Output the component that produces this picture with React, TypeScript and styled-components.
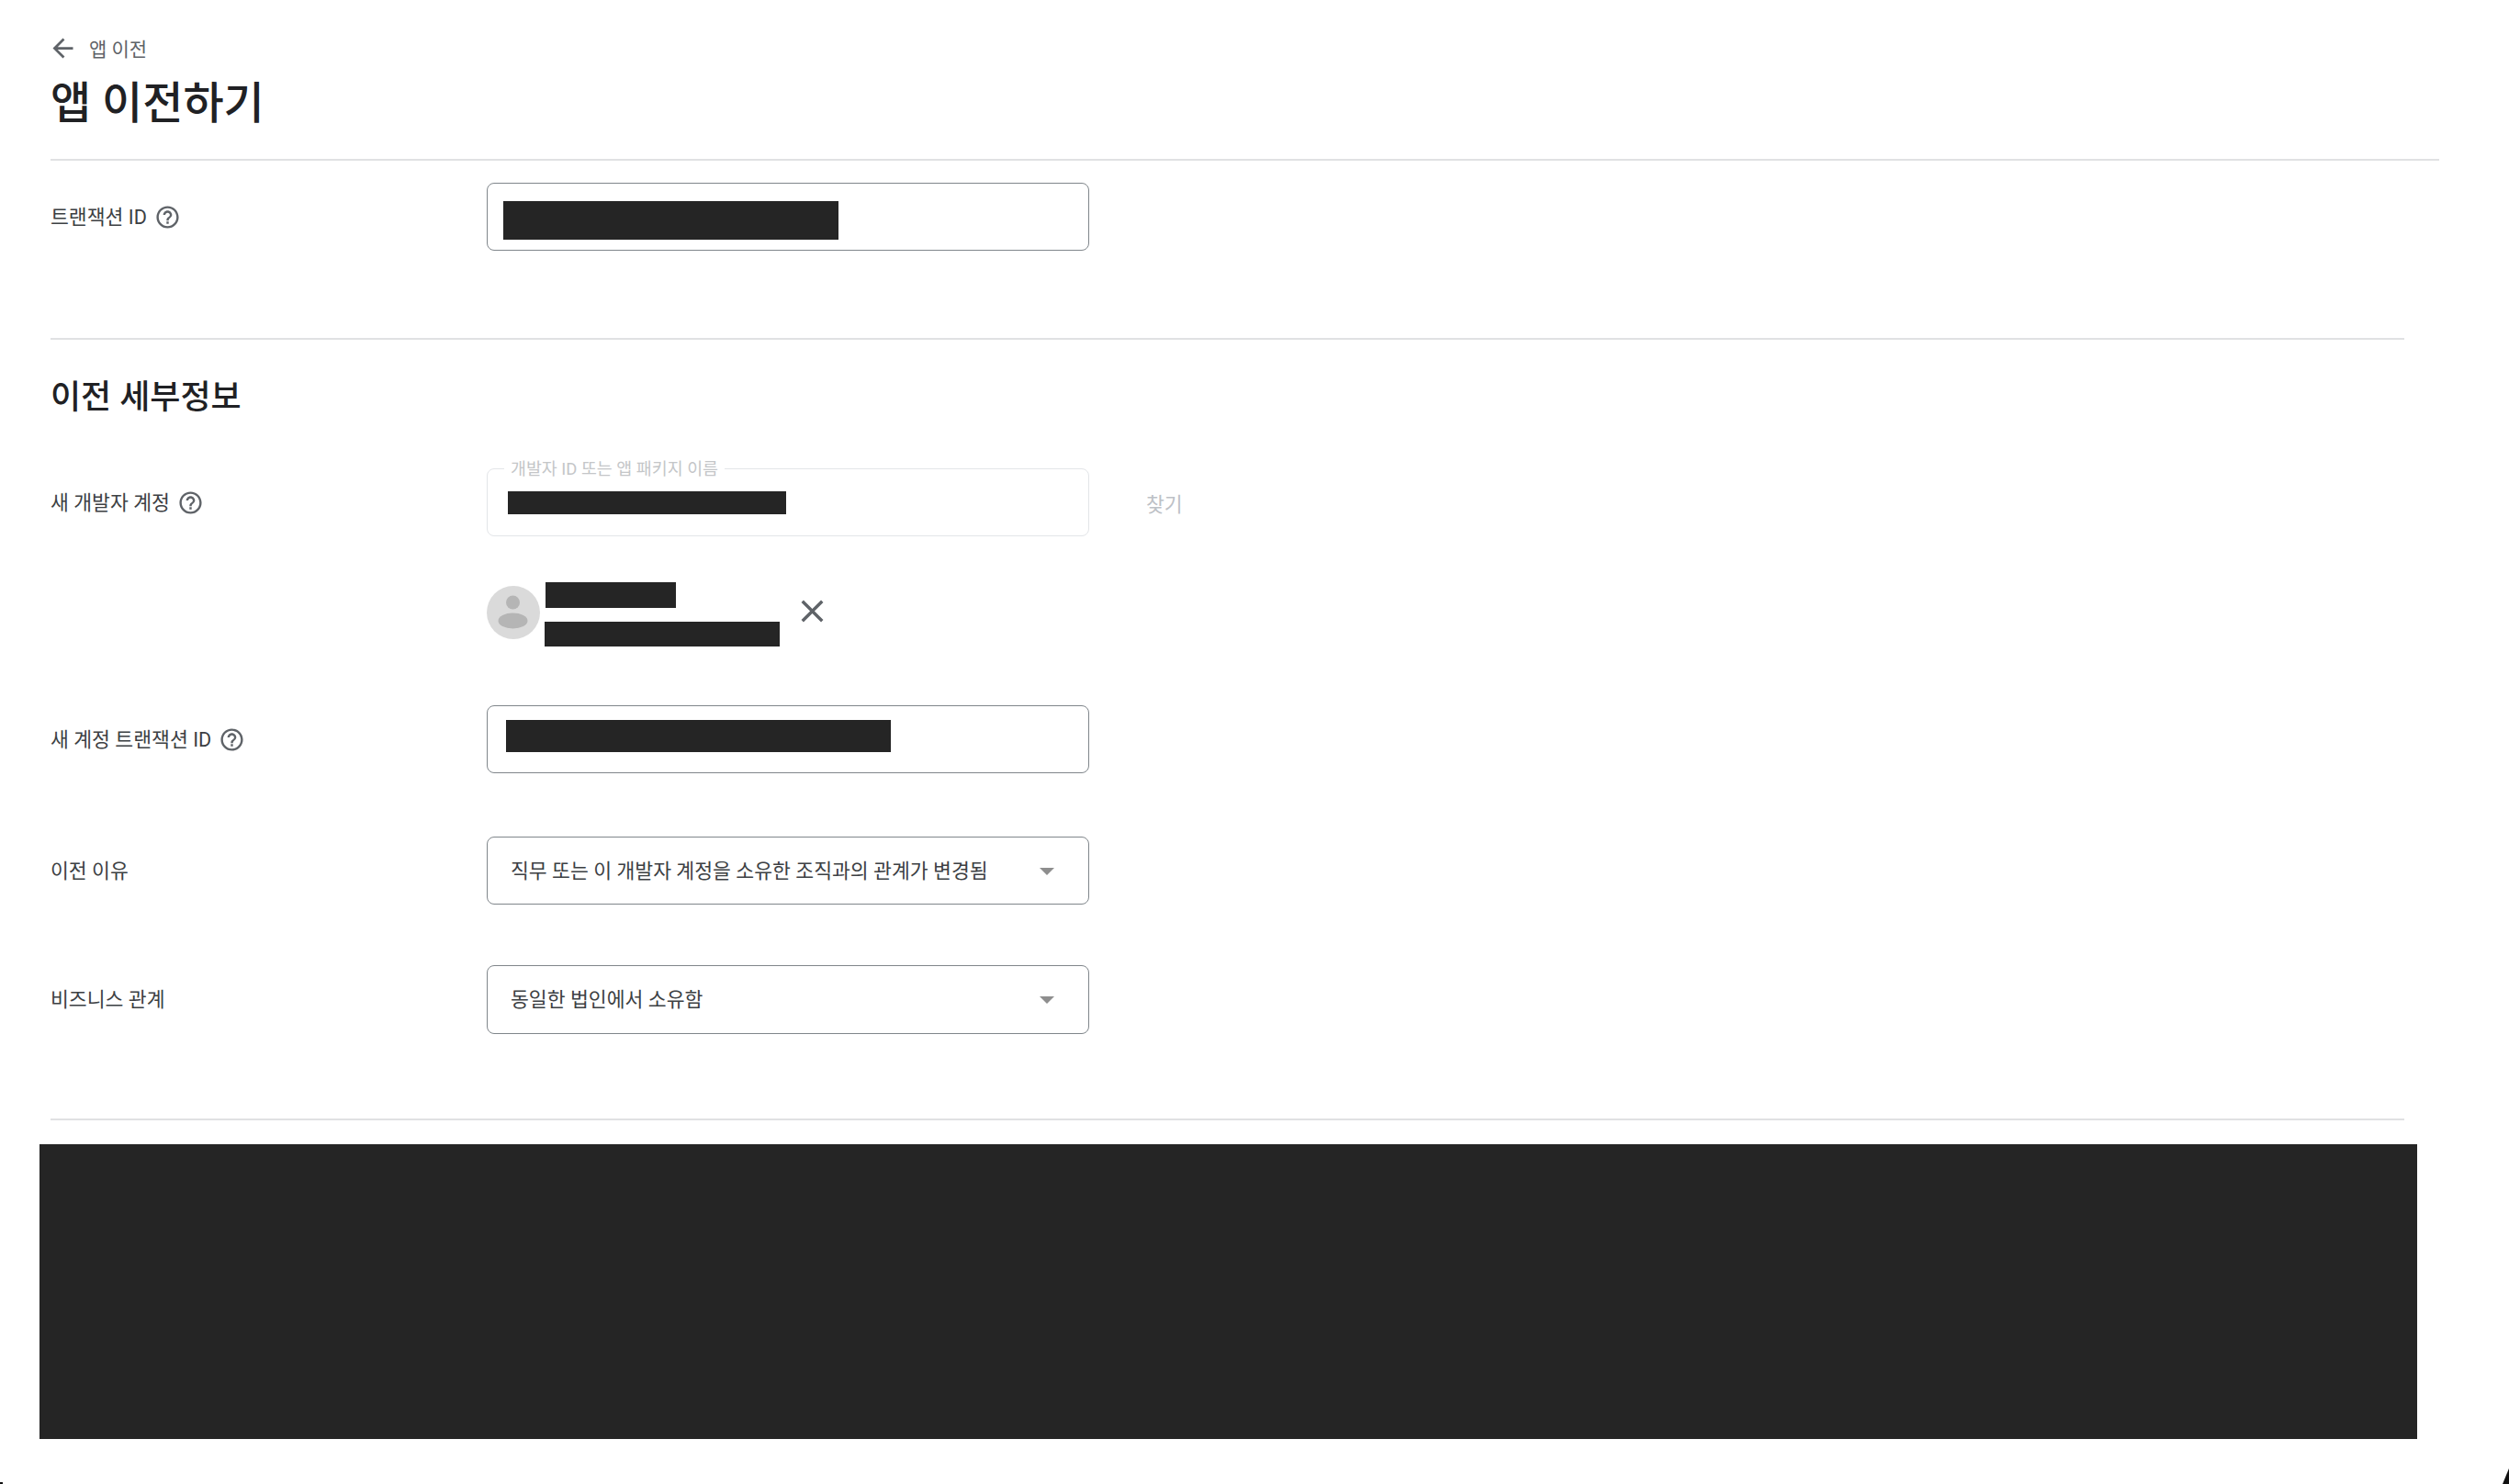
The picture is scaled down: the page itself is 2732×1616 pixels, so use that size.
import React from 'react';
import styled, {createGlobalStyle} from 'styled-components';

const GlobalStyle = createGlobalStyle`
  html, body {
    margin: 0;
    background: #fff;
  }
  body {
    font-family: Roboto, "Noto Sans CJK KR", sans-serif;
    color: #202124;
  }
  * {
    box-sizing: border-box;
  }
`

const BackIcon = () => (
    <BackSvg viewBox="0 0 24 24">
        <path d="M20 11H7.83l5.59-5.59L12 4l-8 8 8 8 1.41-1.41L7.83 13H20v-2z"/>
    </BackSvg>
)

const HelpIcon = () => (
    <HelpSvg viewBox="0 0 24 24">
        <path d="M11 18h2v-2h-2v2zm1-16C6.48 2 2 6.48 2 12s4.48 10 10 10 10-4.48 10-10S17.52 2 12 2zm0 18c-4.41 0-8-3.59-8-8s3.59-8 8-8 8 3.59 8 8-3.59 8-8 8zm0-14c-2.21 0-4 1.79-4 4h2c0-1.1.9-2 2-2s2 .9 2 2c0 2-3 1.75-3 5h2c0-2.25 3-2.5 3-5 0-2.21-1.79-4-4-4z"/>
    </HelpSvg>
)

const CloseIcon = () => (
    <svg width="41" height="41" viewBox="0 0 24 24" fill="#5f6368">
        <path d="M19 6.41L17.59 5 12 10.59 6.41 5 5 6.41 10.59 12 5 17.59 6.41 19 12 13.41 17.59 19 19 17.59 13.41 12z"/>
    </svg>
)

const PersonIcon = () => (
    <AvatarSvg viewBox="0 0 58 58">
        <circle cx="29" cy="29" r="29" fill="#dadada"/>
        <circle cx="28.5" cy="18" r="7.5" fill="#b5b5b5"/>
        <ellipse cx="28.5" cy="38" rx="16" ry="8.5" fill="#b5b5b5"/>
    </AvatarSvg>
)

function App() {
    return (
        <Page>
            <GlobalStyle/>
            <Header>
                <Breadcrumb>
                    <BackIcon/>
                    <span>앱 이전</span>
                </Breadcrumb>
                <Title>앱 이전하기</Title>
            </Header>
            <Divider $right={76}/>

            <Row $top={24}>
                <Label>트랜잭션 ID <HelpIcon/></Label>
                <Field $left={18} $top={20}>
                    <Redacted $w={365} $h={42}/>
                </Field>
            </Row>
            <Divider $right={114} $top={95}/>

            <SectionTitle>이전 세부정보</SectionTitle>

            <Row>
                <Label>새 개발자 계정 <HelpIcon/></Label>
                <Field $disabled $left={23} $top={25}>
                    <Legend>개발자 ID 또는 앱 패키지 이름</Legend>
                    <Redacted $w={303} $h={25}/>
                </Field>
                <FindButton>찾기</FindButton>
            </Row>

            <Account>
                <PersonIcon/>
                <AccountLines>
                    <Redacted $w={142} $h={28} $shift={1}/>
                    <Redacted $w={256} $h={27}/>
                </AccountLines>
                <RemoveButton><CloseIcon/></RemoveButton>
            </Account>

            <Row $top={64}>
                <Label>새 계정 트랜잭션 ID <HelpIcon/></Label>
                <Field $left={21} $top={16}>
                    <Redacted $w={419} $h={35}/>
                </Field>
            </Row>

            <Row $top={69}>
                <Label>이전 이유</Label>
                <Select>
                    <span>직무 또는 이 개발자 계정을 소유한 조직과의 관계가 변경됨</span>
                    <Caret/>
                </Select>
            </Row>

            <Row $top={66}>
                <Label>비즈니스 관계</Label>
                <Select $tall>
                    <span>동일한 법인에서 소유함</span>
                    <Caret/>
                </Select>
            </Row>
            <Divider $right={114} $top={92}/>

            <DarkBlock/>
            <WindowCorner $side="left"/>
            <WindowCorner $side="right"/>
        </Page>
    );
}

export default App;

const Page = styled.div`
  position: relative;
  height: 1616px;
  padding-left: 55px;
  overflow: hidden;
`
const Header = styled.header`
  height: 173px;
  padding-top: 36px;
`
const Breadcrumb = styled.div`
  display: flex;
  align-items: center;
  gap: 12px;
  height: 32px;
  font-size: 21px;
  color: #5f6368;
`
const BackSvg = styled.svg`
  flex: none;
  width: 33px;
  height: 33px;
  margin-left: -3px;
  fill: #5f6368;
`
const Title = styled.h1`
  margin: 15px 0 0;
  font-size: 48px;
  line-height: 60px;
  font-weight: 500;
  color: #202124;
`
const Divider = styled.hr<{ $right: number, $top?: number }>`
  height: 2px;
  margin: ${p => p.$top || 0}px ${p => p.$right}px 0 0;
  border: none;
  background: #e0e1e3;
`
const Row = styled.div<{ $top?: number }>`
  display: flex;
  align-items: center;
  margin-top: ${p => p.$top || 0}px;
`
const Label = styled.label`
  display: flex;
  align-items: center;
  gap: 8px;
  width: 475px;
  padding-bottom: 4px;
  font-size: 21.6px;
  color: #3c4043;
`
const HelpSvg = styled.svg`
  flex: none;
  width: 29px;
  height: 29px;
  margin-top: 4px;
  fill: #5f6368;
`
const Field = styled.div<{ $left: number, $top: number, $disabled?: boolean }>`
  position: relative;
  display: flex;
  align-items: flex-start;
  width: 656px;
  height: 74px;
  padding: ${p => p.$top - 1}px 0 0 ${p => p.$left - 1}px;
  border: 1px solid ${p => p.$disabled ? '#e3e5e8' : '#80868b'};
  border-radius: 8px;
`
const Legend = styled.span`
  position: absolute;
  left: 18px;
  top: -11px;
  padding: 0 7px;
  background: #fff;
  font-size: 18.4px;
  line-height: 22px;
  color: #c4c6c8;
`
const Redacted = styled.div<{ $w: number, $h: number, $shift?: number }>`
  flex: none;
  width: ${p => p.$w}px;
  height: ${p => p.$h}px;
  margin-left: ${p => p.$shift || 0}px;
  background: #252525;
`
const FindButton = styled.span`
  margin: 0 0 0 62px;
  font-size: 21.6px;
  color: #bdc1c6;
`
const SectionTitle = styled.h2`
  margin: 40px 0 54px;
  font-size: 36px;
  line-height: 46px;
  font-weight: 500;
  color: #202124;
`
const Account = styled.div`
  display: flex;
  align-items: center;
  gap: 5px;
  margin: 50px 0 0 475px;
`
const AvatarSvg = styled.svg`
  flex: none;
  width: 58px;
  height: 58px;
  margin-top: -4px;
`
const AccountLines = styled.div`
  display: flex;
  flex-direction: column;
  gap: 15px;
`
const RemoveButton = styled.span`
  display: flex;
  margin: -8px 0 0 10px;
`
const Select = styled.div<{ $tall?: boolean }>`
  display: flex;
  align-items: center;
  justify-content: space-between;
  width: 656px;
  height: ${p => p.$tall ? 75 : 74}px;
  padding: 0 37px 4px 25px;
  border: 1px solid #80868b;
  border-radius: 8px;
  font-size: 21.6px;
  color: #3c4043;
`
const Caret = styled.i`
  width: 0;
  height: 0;
  margin-top: 5px;
  border-left: 8px solid transparent;
  border-right: 8px solid transparent;
  border-top: 8px solid #8e8e8e;
`
const DarkBlock = styled.div`
  width: 2589px;
  height: 321px;
  margin: 26px 0 0 -12px;
  background: #252525;
`
const WindowCorner = styled.div<{ $side: 'left' | 'right' }>`
  position: absolute;
  bottom: 0;
  ${p => p.$side}: 0;
  width: ${p => p.$side === 'left' ? 3 : 7}px;
  height: ${p => p.$side === 'left' ? 2 : 17}px;
  background: #111;
  clip-path: ${p => p.$side === 'right' ? 'polygon(100% 0, 100% 100%, 0 100%)' : 'none'};
`
